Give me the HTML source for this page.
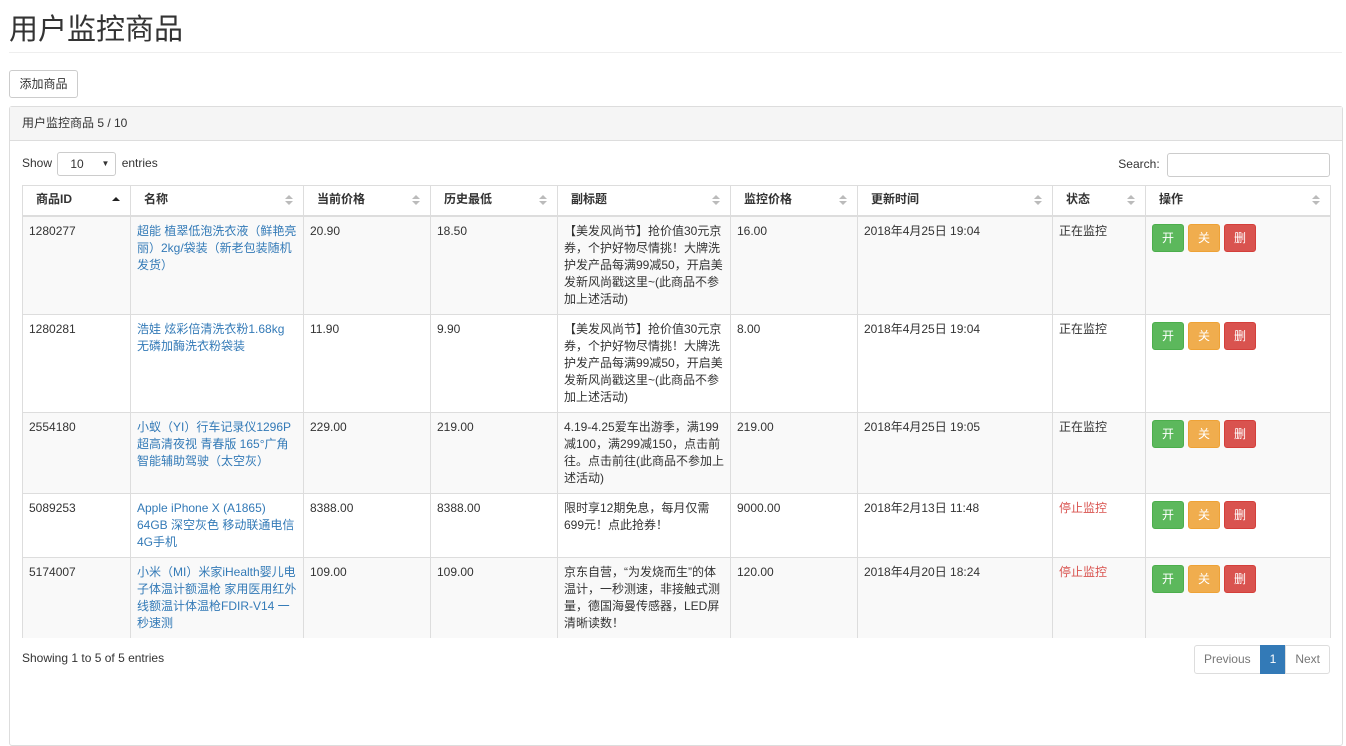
<!DOCTYPE html><html><head><meta charset="utf-8"><style>
*{box-sizing:border-box}
body{margin:0;font-family:"Liberation Sans","Noto Sans CJK SC",sans-serif;font-size:12px;color:#333;background:#fff;width:1346px;height:690px;overflow:hidden}
h1{font-weight:400;font-size:29px;margin:0;position:absolute;left:9px;top:12px;line-height:36px}
.hr{position:absolute;left:9px;right:4px;top:52px;border-top:1px solid #eee}
.btn{position:absolute;left:9px;top:70px;width:69px;height:28px;border:1px solid #ccc;border-radius:3px;line-height:26px;text-align:center;background:#fff}
.panel{position:absolute;left:9px;top:106px;width:1334px;height:640px;border:1px solid #ddd;border-radius:3px}
.ph{height:34px;background:#f5f5f5;border-bottom:1px solid #ddd;padding:0 12px;line-height:33px}
.show{position:absolute;left:12px;top:44px;line-height:24px}
.sel{display:inline-block;width:59px;height:24px;border:1px solid #ccc;border-radius:3px;vertical-align:middle;padding-left:12px;margin:0 2px;position:relative;line-height:22px}
.sel:after{content:"▼";position:absolute;right:6px;font-size:8px;top:0}
.search{position:absolute;right:12px;top:45px;line-height:24px}
.search span{display:inline-block;width:163px;height:24px;border:1px solid #ccc;border-radius:3px;vertical-align:middle;margin-left:4px}
table{position:absolute;left:12px;top:78px;border-collapse:collapse;table-layout:fixed;width:1308px}
th,td{border:1px solid #ddd;padding:6px 6px;vertical-align:top;text-align:left;line-height:17px}
th{height:30px;padding:5px 6px 5px 13px;border-bottom:2px solid #ddd;font-weight:700;position:relative}
th:after{content:"";position:absolute;right:10px;top:9px;border:4px solid transparent;border-bottom:4px solid #bbb;border-top:none}
th:before{content:"";position:absolute;right:10px;top:15px;border:4px solid transparent;border-top:4px solid #bbb;border-bottom:none}
th.asc:after{border-bottom-color:#222;top:11px}th.asc:before{display:none}
tr.o td{background:#f9f9f9}
td{border-top:none}
tr.last td{border-bottom:none}
a{color:#337ab7;text-decoration:none}
.red{color:#d9534f}
.b{display:inline-block;width:32px;height:28px;border-radius:3px;color:#fff;text-align:center;line-height:27px;margin-right:4px;margin-top:1px}
.g{background:#5cb85c;border:1px solid #4cae4c}.y{background:#f0ad4e;border:1px solid #eea236}.r{background:#d9534f;border:1px solid #d43f3a}
.info{position:absolute;left:12px;top:544px}
.pg{position:absolute;right:12px;top:538px;display:flex;height:29px}
.pg span{border:1px solid #ddd;padding:0 10px;line-height:27px;color:#777;margin-left:-1px}
.pg .a{background:#337ab7;border-color:#337ab7;color:#fff;padding:0 9px}
.pg span:first-child{border-radius:3px 0 0 3px;padding:0 9px}.pg span:last-child{border-radius:0 3px 3px 0;padding:0 9px}
</style></head><body>
<h1>用户监控商品</h1><div class="hr"></div>
<div class="btn">添加商品</div>
<div class="panel">
<div class="ph">用户监控商品 5 / 10</div>
<div class="show">Show <span class="sel">10</span> entries</div>
<div class="search">Search: <span></span></div>
<table>
<colgroup><col style="width:108px"><col style="width:173px"><col style="width:127px"><col style="width:127px"><col style="width:173px"><col style="width:127px"><col style="width:195px"><col style="width:93px"><col style="width:185px"></colgroup>
<tr><th class="asc">商品ID</th><th>名称</th><th>当前价格</th><th>历史最低</th><th>副标题</th><th>监控价格</th><th>更新时间</th><th>状态</th><th>操作</th></tr>
<tr class="o" style="height:98px"><td>1280277</td><td><a>超能 植翠低泡洗衣液（鲜艳亮丽）2kg/袋装（新老包装随机发货）</a></td><td>20.90</td><td>18.50</td><td>【美发风尚节】抢价值30元京券，个护好物尽情挑！大牌洗护发产品每满99减50，开启美发新风尚戳这里~(此商品不参加上述活动)</td><td>16.00</td><td>2018年4月25日 19:04</td><td>正在监控</td><td><span class="b g">开</span><span class="b y">关</span><span class="b r">删</span></td></tr>
<tr style="height:98px"><td>1280281</td><td><a>浩娃 炫彩倍清洗衣粉1.68kg 无磷加酶洗衣粉袋装</a></td><td>11.90</td><td>9.90</td><td>【美发风尚节】抢价值30元京券，个护好物尽情挑！大牌洗护发产品每满99减50，开启美发新风尚戳这里~(此商品不参加上述活动)</td><td>8.00</td><td>2018年4月25日 19:04</td><td>正在监控</td><td><span class="b g">开</span><span class="b y">关</span><span class="b r">删</span></td></tr>
<tr class="o" style="height:81px"><td>2554180</td><td><a>小蚁（YI）行车记录仪1296P 超高清夜视 青春版 165°广角 智能辅助驾驶（太空灰）</a></td><td>229.00</td><td>219.00</td><td>4.19-4.25爱车出游季，满199减100，满299减150，点击前往。点击前往(此商品不参加上述活动)</td><td>219.00</td><td>2018年4月25日 19:05</td><td>正在监控</td><td><span class="b g">开</span><span class="b y">关</span><span class="b r">删</span></td></tr>
<tr style="height:64px"><td>5089253</td><td><a>Apple iPhone X (A1865) 64GB 深空灰色 移动联通电信4G手机</a></td><td>8388.00</td><td>8388.00</td><td>限时享12期免息，每月仅需699元！点此抢券！</td><td>9000.00</td><td>2018年2月13日 11:48</td><td class="red">停止监控</td><td><span class="b g">开</span><span class="b y">关</span><span class="b r">删</span></td></tr>
<tr class="o last" style="height:80px"><td>5174007</td><td><a>小米（MI）米家iHealth婴儿电子体温计额温枪 家用医用红外线额温计体温枪FDIR-V14 一秒速测</a></td><td>109.00</td><td>109.00</td><td style="padding-bottom:0">京东自营，“为发烧而生”的体温计，一秒测速，非接触式测量，德国海曼传感器，LED屏清晰读数！</td><td>120.00</td><td>2018年4月20日 18:24</td><td class="red">停止监控</td><td><span class="b g">开</span><span class="b y">关</span><span class="b r">删</span></td></tr>
</table>
<div class="info">Showing 1 to 5 of 5 entries</div>
<div class="pg"><span>Previous</span><span class="a">1</span><span>Next</span></div>
</div>
</body></html>
